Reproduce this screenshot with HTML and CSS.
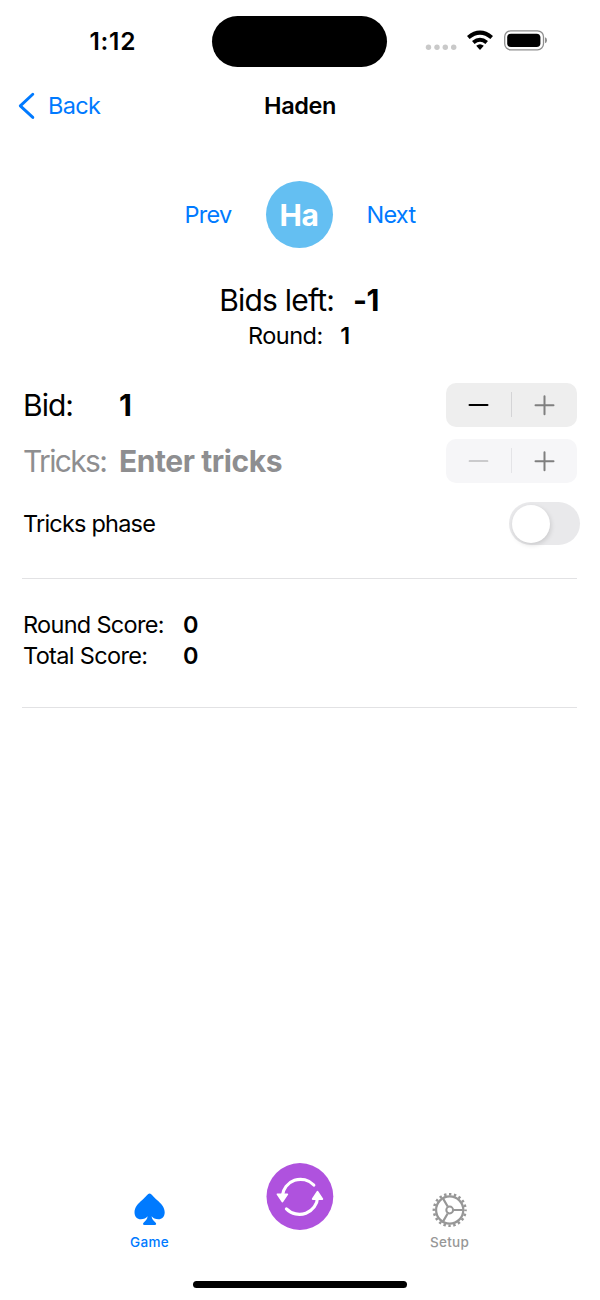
FILE: index.html
```html
<!DOCTYPE html>
<html lang="en">
<head>
<meta charset="utf-8">
<title>Haden</title>
<link rel="stylesheet" href="styles.css">
</head>
<body>
<div class="screen">
  <header class="status">
    <span class="time">1:12</span>
    <span class="island"></span>
    <svg class="status-icons" width="124" height="24" viewBox="424 29 124 24">
      <g fill="#c9c9c9"><circle cx="428.5" cy="47.3" r="2.7"/><circle cx="437" cy="47.3" r="2.7"/><circle cx="445.3" cy="47.3" r="2.7"/><circle cx="453.7" cy="47.3" r="2.7"/></g>
      <g fill="none" stroke="#000" stroke-width="4"><path d="M468.3 37.5Q480 27.7 491.700 37.500"/><path d="M473.300 42.500Q480 37 486.700 42.500"/></g>
      <path d="M476.200 45.800Q480 42.700 483.800 45.800L480 50Z"/>
      <rect x="504.700" y="30.800" width="38.800" height="19" rx="6" fill="none" stroke="#8e8e8e" stroke-width="1.300"/>
      <rect x="507.200" y="33.700" width="33.200" height="13.400" rx="3.800"/>
      <path d="M545 37.300Q547 38 547 40.300T545 43.300Z" fill="#8e8e8e"/>
    </svg>
  </header>
  <nav class="navbar">
    <a class="back"><svg width="17" height="28" viewBox="18 92 17 28"><path d="M32.800 94.200L20.300 105.900L32.800 117.400" fill="none" stroke="#007aff" stroke-width="2.900" stroke-linecap="round" stroke-linejoin="round"/></svg><span>Back</span></a>
    <h1>Haden</h1>
  </nav>
  <main>
    <section class="player"><a class="prev">Prev</a><span class="avatar">Ha</span><a class="next">Next</a></section>
    <section class="summary">
      <div class="bids-left"><span class="bids-label">Bids left:</span><b>-1</b></div>
      <div class="round"><span class="round-label">Round:</span><b>1</b></div>
    </section>
    <section class="entries">
      <div class="entry">
        <span class="entry-label bid-label">Bid:</span><b>1</b>
        <svg class="stepper" width="131" height="44" viewBox="0 0 131 44"><rect width="131" height="44" rx="10" fill="#eee"/><path d="M65.500 9v25" stroke="#d4d4d6"/><path d="M23.500 22h18" stroke="#000" stroke-width="2" stroke-linecap="round"/><path d="M89.500 22.300h18M98.500 13.300v18" stroke="#7f7f7f" stroke-width="2" stroke-linecap="round"/></svg>
      </div>
      <div class="entry muted">
        <span class="entry-label tricks-label">Tricks:</span><b class="placeholder">Enter tricks</b>
        <svg class="stepper" width="131" height="44" viewBox="0 0 131 44"><rect width="131" height="44" rx="10" fill="#f6f6f8"/><path d="M65.500 9v25" stroke="#e4e4e7"/><path d="M23.500 22h18" stroke="#bcbcbe" stroke-width="1.700" stroke-linecap="round"/><path d="M89.500 22.300h18M98.500 13.300v18" stroke="#7f7f7f" stroke-width="2" stroke-linecap="round"/></svg>
      </div>
      <div class="phase"><span class="phase-label">Tricks phase</span><span class="switch"><span class="knob"></span></span></div>
    </section>
    <section class="scores">
      <div class="score"><span class="rs-label">Round Score:</span><b>0</b></div>
      <div class="score"><span class="ts-label">Total Score:</span><b>0</b></div>
    </section>
  </main>
  <footer class="tabs">
    <a class="tab active">
      <svg width="36" height="36" viewBox="132 1192 36 36" fill="#007aff"><path d="M149.600 1193.500C151.500 1193.500 153 1196.500 157 1200C161 1203.500 164.700 1207 164.700 1212.300C164.700 1216.700 162 1219.300 158.400 1219.300C155.500 1219.300 153 1218 151.600 1216.300C151.800 1219.300 153.500 1220.700 155.200 1222.200C156.800 1223.700 156.300 1225 154.800 1225H144.400C142.900 1225 142.400 1223.700 144 1222.200C145.700 1220.700 147.400 1219.300 147.600 1216.300C146.200 1218 143.700 1219.300 140.800 1219.300C137.200 1219.300 134.500 1216.700 134.500 1212.300C134.500 1207 138.200 1203.500 142.200 1200C146.200 1196.500 147.700 1193.500 149.600 1193.500Z"/></svg>
      <span>Game</span>
    </a>
    <a class="sync">
      <svg width="68" height="68" viewBox="266 1162 68 68"><circle cx="299.900" cy="1196.500" r="33.400" fill="#af52de"/><g fill="none" stroke="#fff" stroke-width="3.200" stroke-linecap="round"><path d="M313.800 1185A18.300 18.300 0 0 0 282.300 1196"/><path d="M286.400 1208.900A18.300 18.300 0 0 0 317.700 1197"/></g><g fill="#fff" stroke="#fff" stroke-width="1.800" stroke-linejoin="round"><path d="M277.500 1194.300H287.300L282.400 1201.500Z"/><path d="M312.700 1199H322.300L317.500 1191.800Z"/></g></svg>
    </a>
    <a class="tab">
      <svg width="36" height="36" viewBox="-17.700 -18 36 36" fill="none" stroke="#979797"><circle r="13.600" stroke-width="2.200"/><circle r="15.800" stroke-width="2.600" stroke-dasharray="2.400 2.564" stroke-dashoffset="1.200"/><circle r="3.400" stroke-width="2"/><path d="M4 0H13M-2 -3.460L-6.600 -11.400M-2 3.460L-6.600 11.400" stroke-width="2.200"/></svg>
      <span>Setup</span>
    </a>
  </footer>
  <div class="home"></div>
</div>
</body>
</html>
```
FILE: styles.css
```css
* { box-sizing: border-box; margin: 0; }
body { background: #fff; color: #000; font: 400 23.5px/32px Inter, "Liberation Sans", sans-serif; }
.screen { display: flex; flex-direction: column; width: 600px; height: 1300px; overflow: hidden; }
a { color: #007aff; }
b { font-weight: 600; }
span, b { white-space: nowrap; }
svg { display: block; flex: none; }

.status { display: grid; grid-template-columns: 212.4px 175px 212.6px; height: 83px; align-items: center; }
.time { padding: 0 0 2px 89.500px; font-size: 24.5px; font-weight: 600; letter-spacing: .7px; }
.island { height: 51px; border-radius: 26px; background: #000; }
.status-icons { margin-left: 36.6px; margin-top: -1px; }

.navbar { display: grid; grid-template-columns: 200px 200px 200px; height: 46px; align-items: center; }
.back { display: flex; align-items: center; gap: 13px; padding-left: 18px; letter-spacing: -.7px; }
.navbar h1 { font-size: 23.500px; font-weight: 600; text-align: center; letter-spacing: -.4px; }

.player { display: flex; align-items: center; gap: 34px; height: 67px; margin-top: 52px; padding-left: 184.4px; }
.prev, .next { width: 47px; letter-spacing: -.7px; }
.avatar { width: 67px; height: 67px; margin: 0 -.2px 0 .2px; border-radius: 50%; background: #64bff2; color: #fff; font-size: 30px; font-weight: 700; line-height: 69px; text-align: center; letter-spacing: -.3px; }

.summary { margin-top: 32px; padding: 0 22px 0 20px; }
.summary > div { display: flex; justify-content: center; }
.bids-left, .entry { font-size: 30px; letter-spacing: -.6px; }
.bids-left b, .entry b { font-weight: 700; }
.bids-left { line-height: 40px; gap: 19px; }
.bids-label { letter-spacing: -.8px; }
.round { line-height: 31px; gap: 17.5px; }
.round-label { letter-spacing: -.5px; }

.entries { padding: 26px 20px 0 23px; }
.entry { display: flex; align-items: center; height: 56px; }
.entry-label { width: 96px; }
.bid-label { letter-spacing: -1px; }
.tricks-label { letter-spacing: -1.65px; }
.entry .placeholder { letter-spacing: -.42px; }
.stepper { margin-left: auto; margin-right: 3px; }
.muted { color: #8e8e90; }
.phase { display: flex; justify-content: space-between; align-items: center; height: 69px; }
.phase-label { letter-spacing: -.8px; }
.switch { width: 71px; height: 43px; border-radius: 22px; padding: 2.500px; background: #e9e9eb; }
.knob { display: block; width: 38px; height: 38px; border-radius: 50%; background: #fff; box-shadow: 1px 2px 5px #0002; }

.scores { height: 130px; margin: 20px 23px 0 22px; padding: 30px 1px; border: solid #e2e2e4; border-width: 1px 0; }
.score { display: flex; line-height: 31px; }
.score span { width: 160px; }
.rs-label { letter-spacing: -.7px; }
.ts-label { letter-spacing: -.65px; }

.tabs { display: grid; grid-template-columns: 100px 99px 201px 99px 101px; height: 90px; margin-top: auto; }
.tab { grid-column: 2; display: flex; flex-direction: column; align-items: center; padding-top: 30px; font-size: 13.500px; font-weight: 500; line-height: 28px; letter-spacing: .3px; }
.sync { grid-column: 3; padding-left: 67px; }
.sync + .tab { grid-column: 4; color: #979797; }
.home { width: 214px; height: 7px; margin: 29px auto 12px 193px; border-radius: 4px; background: #000; }
```
